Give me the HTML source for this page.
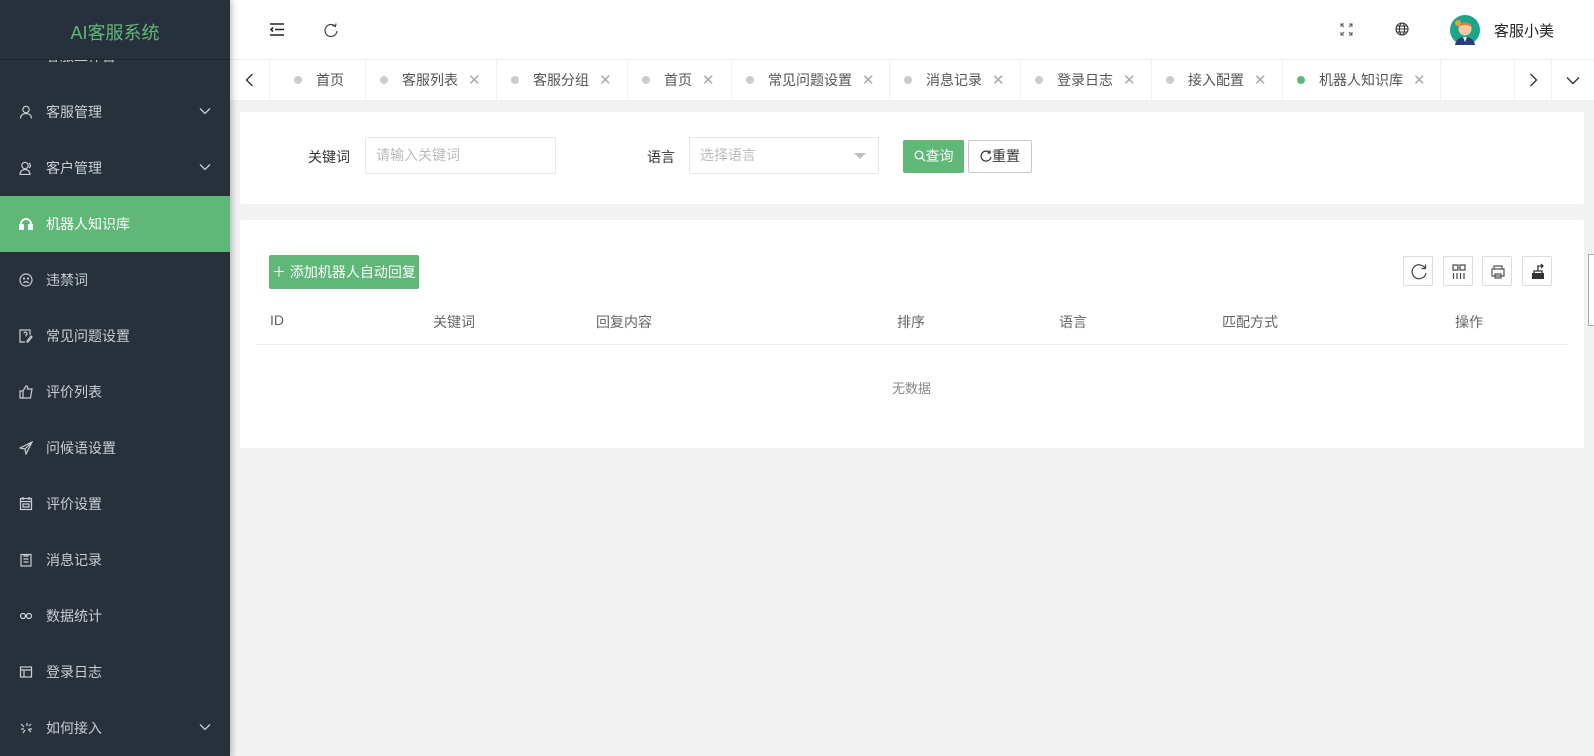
<!DOCTYPE html>
<html><head><meta charset="utf-8"><style>
*{margin:0;padding:0;box-sizing:border-box}
body{width:1594px;height:756px;overflow:hidden;background:#f2f2f2;font-family:"Liberation Sans","Noto Sans CJK SC",sans-serif;font-size:14px;color:#333;position:relative}
.side{position:absolute;left:0;top:0;width:230px;height:756px;background:#28313b;box-shadow:2px 0 6px rgba(0,0,0,.25);z-index:3;overflow:hidden}
.logo{position:absolute;top:0;left:0;width:230px;height:60px;background:#28313b;color:#5fb878;font-size:18px;text-align:center;line-height:66px;border-bottom:1px solid #1f262e;z-index:2}
.item{position:absolute;left:0;width:230px;height:56px;color:#c9ced3;line-height:56px;padding-left:46px;font-size:14px}
.item.act{background:#5fb878;color:#fff}
.item svg{position:absolute;left:19px;top:21px}
.item .arr{position:absolute;left:199px;top:23px}
.hdr{position:absolute;left:230px;top:0;right:0;height:60px;background:#fff;border-bottom:1px solid #f0f0f0}
.tabs{position:absolute;left:230px;top:60px;right:0;height:41px;background:#fff;border-bottom:1px solid #eee}
.tab{position:absolute;top:0;height:41px;border-right:1px solid #f1f1f1;line-height:41px;color:#555;font-size:14px}
.tab i{display:inline-block;width:8px;height:8px;border-radius:50%;background:#ccc;margin-right:14px;vertical-align:1px}
.tab b{font-weight:normal;color:#aaa;margin-left:10px;font-size:15px}
.card{position:absolute;left:240px;width:1344px;background:#fff;border-radius:2px}
.inp{position:absolute;border:1px solid #e6e6e6;border-radius:2px;height:37px;line-height:35px;padding-left:10px;color:#bbb;font-size:14px}
.btn{position:absolute;height:33px;line-height:33px;text-align:center;font-size:14px;border-radius:2px}
.tb{position:absolute;top:256px;width:30px;height:30px;border:1px solid #ddd;border-radius:2px;background:#fff}
.tb svg{position:absolute;left:6px;top:6px}
.th{position:absolute;top:312px;color:#666;font-size:14px}
</style></head><body>
<div class="side">
<div class="logo">AI客服系统</div>
<div class="item" style="top:28px">客服工作台</div>
<div class="item" style="top:84px"><svg width="14" height="14" viewBox="0 0 14 14" fill="none" stroke="#c9ced3" stroke-width="1.2"><circle cx="7" cy="4.5" r="3.2"/><path d="M1.5 13.5c0-3.5 2.5-5 5.5-5s5.5 1.5 5.5 5"/></svg>客服管理<svg class="arr" width="12" height="8" viewBox="0 0 12 8" fill="none" stroke="#c9ced3" stroke-width="1.3"><path d="M1 1.5l5 5 5-5"/></svg></div>
<div class="item" style="top:140px"><svg width="14" height="14" viewBox="0 0 14 14" fill="none" stroke="#c9ced3" stroke-width="1.2"><circle cx="6" cy="4.5" r="3.2"/><path d="M1 13.5c0-3.5 2.5-5 5-5s5 1.5 5 5zM10 2a3 3 0 0 1 0 5"/></svg>客户管理<svg class="arr" width="12" height="8" viewBox="0 0 12 8" fill="none" stroke="#c9ced3" stroke-width="1.3"><path d="M1 1.5l5 5 5-5"/></svg></div>
<div class="item act" style="top:196px"><svg width="14" height="14" viewBox="0 0 14 14" fill="none" stroke="#fff" stroke-width="1.8"><path d="M2 9V7a5 5 0 0 1 10 0v2"/><rect x="1" y="8" width="3" height="4" fill="#fff"/><rect x="10" y="8" width="3" height="4" fill="#fff"/></svg>机器人知识库</div>
<div class="item" style="top:252px"><svg width="14" height="14" viewBox="0 0 14 14" fill="none" stroke="#c9ced3" stroke-width="1.2"><circle cx="7" cy="7" r="6"/><circle cx="5" cy="5.5" r=".5"/><circle cx="9" cy="5.5" r=".5"/><path d="M4.5 10a3 3 0 0 1 5 0"/></svg>违禁词</div>
<div class="item" style="top:308px"><svg width="14" height="14" viewBox="0 0 14 14" fill="none" stroke="#c9ced3" stroke-width="1.2"><path d="M11 6V1H1v12h5"/><path d="M5 4.5a1.5 1.5 0 1 1 2 1.5v1.5M13 8l-4 5H8v-1l4-5z"/></svg>常见问题设置</div>
<div class="item" style="top:364px"><svg width="14" height="14" viewBox="0 0 14 14" fill="none" stroke="#c9ced3" stroke-width="1.2"><path d="M1 6h3v7H1zM4 6l3-5c1.5 0 2 1 1.5 3H13l-1.5 9H4"/></svg>评价列表</div>
<div class="item" style="top:420px"><svg width="14" height="14" viewBox="0 0 14 14" fill="none" stroke="#c9ced3" stroke-width="1.2"><path d="M13 1L1 7l5 1 1 5zM6 8l7-7"/></svg>问候语设置</div>
<div class="item" style="top:476px"><svg width="14" height="14" viewBox="0 0 14 14" fill="none" stroke="#c9ced3" stroke-width="1.2"><rect x="1.5" y="1.5" width="11" height="11"/><path d="M1.5 4.5h11M4 0v3M10 0v3M4 7h6v3H4z"/></svg>评价设置</div>
<div class="item" style="top:532px"><svg width="14" height="14" viewBox="0 0 14 14" fill="none" stroke="#c9ced3" stroke-width="1.2"><rect x="2" y="1.5" width="10" height="11.5"/><path d="M5 1v2h4V1M4.5 6h5M4.5 9h5"/></svg>消息记录</div>
<div class="item" style="top:588px"><svg width="14" height="14" viewBox="0 0 14 14" fill="none" stroke="#c9ced3" stroke-width="1.3"><circle cx="4" cy="7" r="2.5"/><circle cx="10" cy="7" r="2.5"/></svg>数据统计</div>
<div class="item" style="top:644px"><svg width="14" height="14" viewBox="0 0 14 14" fill="none" stroke="#c9ced3" stroke-width="1.2"><rect x="1.5" y="2" width="11" height="10"/><path d="M1.5 5h11M5 5v7"/></svg>登录日志</div>
<div class="item" style="top:700px"><svg width="14" height="14" viewBox="0 0 14 14" fill="none" stroke="#c9ced3" stroke-width="1.2"><path d="M2 3l3 3M2 8h3M4 12l2-3M8 2v3M12 3l-2 2M9 8l3 3M10 8h3"/></svg>如何接入<svg class="arr" width="12" height="8" viewBox="0 0 12 8" fill="none" stroke="#c9ced3" stroke-width="1.3"><path d="M1 1.5l5 5 5-5"/></svg></div>
</div>

<div class="hdr">
<svg style="position:absolute;left:40px;top:23px" width="14" height="13" viewBox="0 0 14 13" fill="none" stroke="#222" stroke-width="1.6"><path d="M0 1h14M5 6.5h9M0 12h14M3 4.5L1 6.5l2 2"/></svg>
<svg style="position:absolute;left:94px;top:23px" width="14" height="14" viewBox="0 0 14 14" fill="none" stroke="#444" stroke-width="1.2"><path d="M11.5 3.5A6 6 0 1 0 13 8"/><path d="M8.5 2.5l3 1 .5-3"/></svg>
<svg style="position:absolute;left:1110px;top:23px" width="13" height="13" viewBox="0 0 13 13" fill="none" stroke="#555" stroke-width="1"><path d="M1 4V1h3M9 1h3v3M12 9v3H9M4 12H1V9M1 1l3 3M12 1L9 4M12 12L9 9M1 12l3-3"/></svg>
<svg style="position:absolute;left:1165px;top:22px" width="14" height="14" viewBox="0 0 14 14" fill="none" stroke="#333" stroke-width="1.1"><circle cx="7" cy="7" r="6"/><ellipse cx="7" cy="7" rx="2.6" ry="6"/><path d="M1 7h12M2 4h10M2 10h10"/></svg>
<svg style="position:absolute;left:1220px;top:15px" width="30" height="30" viewBox="0 0 30 30"><circle cx="15" cy="15" r="15" fill="#1aa68a"/><path d="M5 30c1-6 5-8 10-8s9 2 10 8z" fill="#2b3d7a"/><circle cx="15" cy="14" r="6.5" fill="#f5c8a5"/><path d="M8 12c0-6 14-6 14 0-3-2-9-3-14 0z" fill="#e07b3c"/><circle cx="8" cy="8" r="3" fill="#f0a030"/><path d="M13 22l2 5 2-5z" fill="#fff"/></svg>
<div style="position:absolute;left:1264px;top:20px;font-size:15px;color:#222">客服小美</div>
</div>

<div class="tabs">
<div class="tab" style="left:0;width:40px;text-align:center"><svg width="9" height="14" viewBox="0 0 9 14" fill="none" stroke="#333" stroke-width="1.4" style="vertical-align:-2px"><path d="M7.5 1L1.5 7l6 6"/></svg></div>
<div class="tab" style="left:40px;width:96px;padding-left:24px"><i></i>首页</div>
<div class="tab" style="left:136px;width:131px;padding-left:14px"><i></i>客服列表<b>✕</b></div>
<div class="tab" style="left:267px;width:131px;padding-left:14px"><i></i>客服分组<b>✕</b></div>
<div class="tab" style="left:398px;width:104px;padding-left:14px"><i></i>首页<b>✕</b></div>
<div class="tab" style="left:502px;width:158px;padding-left:14px"><i></i>常见问题设置<b>✕</b></div>
<div class="tab" style="left:660px;width:131px;padding-left:14px"><i></i>消息记录<b>✕</b></div>
<div class="tab" style="left:791px;width:131px;padding-left:14px"><i></i>登录日志<b>✕</b></div>
<div class="tab" style="left:922px;width:131px;padding-left:14px"><i></i>接入配置<b>✕</b></div>
<div class="tab" style="left:1053px;width:158px;padding-left:14px"><i style="background:#5fb878"></i>机器人知识库<b>✕</b></div>
<div class="tab" style="left:1284px;width:38px;border-left:1px solid #f1f1f1;text-align:center"><svg width="9" height="14" viewBox="0 0 9 14" fill="none" stroke="#333" stroke-width="1.4" style="vertical-align:-2px"><path d="M1.5 1l6 6-6 6"/></svg></div>
<div class="tab" style="left:1322px;width:42px;text-align:center;border:none"><svg width="14" height="9" viewBox="0 0 14 9" fill="none" stroke="#333" stroke-width="1.4"><path d="M1 1.5l6 6 6-6"/></svg></div>
</div>

<div class="card" style="top:112px;height:92px"></div>
<div style="position:absolute;left:308px;top:147px;color:#333">关键词</div>
<div class="inp" style="left:365px;top:137px;width:191px">请输入关键词</div>
<div style="position:absolute;left:647px;top:147px;color:#333">语言</div>
<div class="inp" style="left:689px;top:137px;width:190px">选择语言<span style="position:absolute;right:12px;top:15px;width:0;height:0;border:6px solid transparent;border-top:6px solid #c2c2c2;border-bottom:none"></span></div>
<div class="btn" style="left:903px;top:140px;width:61px;background:#5fb878;color:#fff"><svg width="12" height="12" viewBox="0 0 12 12" fill="none" stroke="#fff" stroke-width="1.3" style="vertical-align:-1px"><circle cx="5" cy="5" r="3.8"/><path d="M8 8l3 3"/></svg>查询</div>
<div class="btn" style="left:968px;top:140px;width:64px;border:1px solid #c9c9c9;line-height:31px;color:#333;background:#fff"><svg width="12" height="12" viewBox="0 0 12 12" fill="none" stroke="#333" stroke-width="1.2" style="vertical-align:-1px"><path d="M10 3a5 5 0 1 0 1 4M10 .5V3H7.5"/></svg>重置</div>

<div class="card" style="top:220px;height:228px"></div>
<div class="btn" style="left:269px;top:255px;width:150px;height:34px;line-height:34px;background:#5fb878;color:#fff">＋ 添加机器人自动回复</div>
<div class="tb" style="left:1403px"><svg width="18" height="18" viewBox="0 0 18 18" fill="none" stroke="#444" stroke-width="1.2"><path d="M15 5A7 7 0 1 0 16 10"/><path d="M15.5 1.5V5.5H11.5"/></svg></div>
<div class="tb" style="left:1443px"><svg width="18" height="18" viewBox="0 0 18 18" fill="none" stroke="#444" stroke-width="1.2"><rect x="3" y="2" width="5" height="5"/><rect x="10" y="2" width="5" height="5"/><path d="M3.5 10v6M7 10v6M10.5 10v6M14 10v6"/></svg></div>
<div class="tb" style="left:1482px"><svg width="18" height="18" viewBox="0 0 18 18" fill="none" stroke="#555" stroke-width="1.2"><path d="M5 6V3h8v3M3 6h12v7H3zM6 11h6v4H6z"/></svg></div>
<div class="tb" style="left:1522px"><svg width="18" height="18" viewBox="0 0 18 18"><rect x="3" y="10" width="12" height="6" fill="#333"/><path d="M5 10V8h8v2" fill="none" stroke="#333" stroke-width="1.3"/><path d="M9 8V3h4" fill="none" stroke="#333" stroke-width="1.3"/><path d="M12 1l2 2-2 2" fill="none" stroke="#333" stroke-width="1.3"/></svg></div>
<div class="th" style="left:270px">ID</div>
<div class="th" style="left:433px">关键词</div>
<div class="th" style="left:596px">回复内容</div>
<div class="th" style="left:897px">排序</div>
<div class="th" style="left:1059px">语言</div>
<div class="th" style="left:1222px">匹配方式</div>
<div class="th" style="left:1455px">操作</div>
<div style="position:absolute;left:255px;top:344px;width:1314px;height:1px;background:#eee"></div>
<div style="position:absolute;left:892px;top:378px;color:#888;font-size:13px">无数据</div>
<div style="position:absolute;left:1588px;top:254px;width:10px;height:72px;background:#fff;border:1px solid #aaa"></div>
</body></html>
